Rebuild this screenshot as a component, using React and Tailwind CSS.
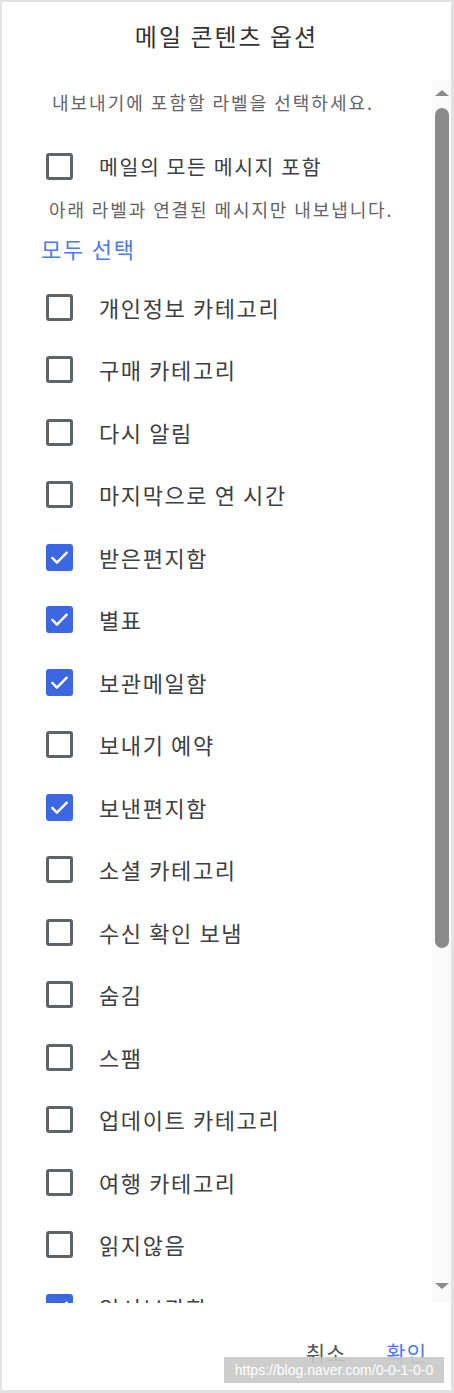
import { useState } from "react";

const labels = [
  { name: "개인정보 카테고리", checked: false },
  { name: "구매 카테고리", checked: false },
  { name: "다시 알림", checked: false },
  { name: "마지막으로 연 시간", checked: false },
  { name: "받은편지함", checked: true },
  { name: "별표", checked: true },
  { name: "보관메일함", checked: true },
  { name: "보내기 예약", checked: false },
  { name: "보낸편지함", checked: true },
  { name: "소셜 카테고리", checked: false },
  { name: "수신 확인 보냄", checked: false },
  { name: "숨김", checked: false },
  { name: "스팸", checked: false },
  { name: "업데이트 카테고리", checked: false },
  { name: "여행 카테고리", checked: false },
  { name: "읽지않음", checked: false },
  { name: "임시보관함", checked: true },
];

const Checkbox = ({ checked, onClick }) => (
  <button
    onClick={onClick}
    className={`flex h-[27px] w-[27px] shrink-0 items-center justify-center rounded-[3px] ${
      checked ? "bg-[#3d67e2]" : "border-[3px] border-[#5f6368] bg-white"
    }`}
  >
    {checked && (
      <svg viewBox="0 0 24 24" className="h-[23px] w-[23px]" fill="none">
        <path d="M4.5 12.5l4.8 4.8L19.5 7" stroke="#fff" strokeWidth="2.6" strokeLinecap="round" strokeLinejoin="round" />
      </svg>
    )}
  </button>
);

export default function App() {
  const [items, setItems] = useState(labels);
  const [all, setAll] = useState(false);

  const toggle = (i) =>
    setItems(items.map((it, j) => (j === i ? { ...it, checked: !it.checked } : it)));

  return (
    <div
      className="relative flex h-[1393px] w-[454px] flex-col border-t-2 border-l-2 border-r-[3px] border-b-[3px] border-[#e2e2e2] bg-white text-[#3c4043]"
      style={{ fontFamily: '"Noto Sans CJK KR", "Noto Sans", sans-serif' }}
    >
      {/* header */}
      <div className="flex h-[78px] shrink-0 justify-center pt-[19px]">
        <h1 className="text-[24px] leading-[30px] tracking-[2px] text-[#333]">메일 콘텐츠 옵션</h1>
      </div>

      {/* scroll area */}
      <div className="flex h-[1223px] shrink-0">
        <div className="flex-1 overflow-hidden">
          <div className="flex h-[45px] items-center whitespace-nowrap pl-[50px] text-[18px] tracking-[2px] text-[#5f6368]">
            내보내기에 포함할 라벨을 선택하세요.
          </div>
          <div className="mt-[19px] flex h-[44px] items-center gap-[26px] pl-[44px]">
            <Checkbox checked={all} onClick={() => setAll(!all)} />
            <span className="whitespace-nowrap text-[20.5px] tracking-[1.6px]">메일의 모든 메시지 포함</span>
          </div>
          <div className="flex h-[43px] items-center whitespace-nowrap pl-[47px] text-[18px] tracking-[1.9px] text-[#5f6368]">
            아래 라벨과 연결된 메시지만 내보냅니다.
          </div>
          <div className="flex h-[34px] items-center pl-[39px]">
            <button
              onClick={() => setItems(items.map((it) => ({ ...it, checked: true })))}
              className="text-[22px] tracking-[1.8px] text-[#4b7bec]"
            >
              모두 선택
            </button>
          </div>
          <ul className="mt-[11px]">
            {items.map((it, i) => (
              <li key={it.name} className="flex h-[62.5px] items-center gap-[26px] pl-[44px]">
                <Checkbox checked={it.checked} onClick={() => toggle(i)} />
                <span className="whitespace-nowrap text-[22px] tracking-[1.6px]">{it.name}</span>
              </li>
            ))}
          </ul>
        </div>

        {/* scrollbar */}
        <div className="flex w-[19px] shrink-0 flex-col items-center bg-[#fafafa] pt-[10px] pb-[14px]">
          <div className="h-0 w-0 border-x-[7px] border-b-[6px] border-x-transparent border-b-[#8a8a8a]" />
          <div className="mt-[12px] h-[840px] w-[14px] rounded-full bg-[#8a8a8a]" />
          <div className="flex-1" />
          <div className="h-0 w-0 border-x-[7px] border-t-[6px] border-x-transparent border-t-[#8a8a8a]" />
        </div>
      </div>

      {/* footer */}
      <div className="flex flex-1 items-start justify-end gap-[40px] pr-[24px] pt-[34px]">
        <button className="text-[21px] leading-[30px] tracking-[1px] text-[#555]">취소</button>
        <button className="text-[21px] leading-[30px] tracking-[1px] text-[#4b7bec]">확인</button>
      </div>

      <div
        className="absolute left-[222px] top-[1355px] flex h-[26px] w-[220px] items-center justify-center whitespace-nowrap bg-[#c8c8c8]/90 text-[14px] text-white"
        style={{ fontFamily: '"Liberation Sans", Arial, sans-serif' }}
      >
        https://blog.naver.com/0-0-1-0-0
      </div>
    </div>
  );
}
